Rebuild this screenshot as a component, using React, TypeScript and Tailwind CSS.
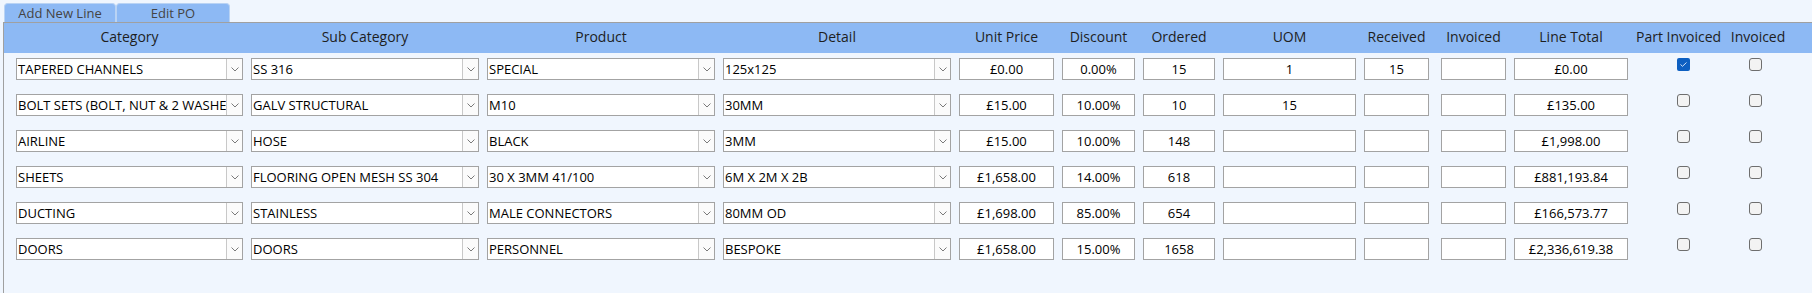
import React from "react";

type Line = {
  category: string;
  sub: string;
  product: string;
  detail: string;
  price: string;
  discount: string;
  ordered: string;
  uom: string;
  received: string;
  invoiced: string;
  total: string;
  partInvoiced: boolean;
  isInvoiced: boolean;
};

const lines: Line[] = [
  { category: "TAPERED CHANNELS", sub: "SS 316", product: "SPECIAL", detail: "125x125", price: "£0.00", discount: "0.00%", ordered: "15", uom: "1", received: "15", invoiced: "", total: "£0.00", partInvoiced: true, isInvoiced: false },
  { category: "BOLT SETS (BOLT, NUT & 2 WASHERS)", sub: "GALV STRUCTURAL", product: "M10", detail: "30MM", price: "£15.00", discount: "10.00%", ordered: "10", uom: "15", received: "", invoiced: "", total: "£135.00", partInvoiced: false, isInvoiced: false },
  { category: "AIRLINE", sub: "HOSE", product: "BLACK", detail: "3MM", price: "£15.00", discount: "10.00%", ordered: "148", uom: "", received: "", invoiced: "", total: "£1,998.00", partInvoiced: false, isInvoiced: false },
  { category: "SHEETS", sub: "FLOORING OPEN MESH SS 304", product: "30 X 3MM 41/100", detail: "6M X 2M X 2B", price: "£1,658.00", discount: "14.00%", ordered: "618", uom: "", received: "", invoiced: "", total: "£881,193.84", partInvoiced: false, isInvoiced: false },
  { category: "DUCTING", sub: "STAINLESS", product: "MALE CONNECTORS", detail: "80MM OD", price: "£1,698.00", discount: "85.00%", ordered: "654", uom: "", received: "", invoiced: "", total: "£166,573.77", partInvoiced: false, isInvoiced: false },
  { category: "DOORS", sub: "DOORS", product: "PERSONNEL", detail: "BESPOKE", price: "£1,658.00", discount: "15.00%", ordered: "1658", uom: "", received: "", invoiced: "", total: "£2,336,619.38", partInvoiced: false, isInvoiced: false },
];

const cols =
  "grid grid-cols-[227px_228px_228px_228px_95px_73px_72px_133px_65px_69px_114px_92px_44px] gap-x-2";

const Combo = ({ value }: { value: string }) => (
  <div className="flex h-[22px] border border-[#a3a3a3] bg-white">
    <div className="flex-1 overflow-hidden whitespace-nowrap pl-[1px] text-[13px] leading-[20px] text-black">
      {value}
    </div>
    <div className="flex w-[16px] items-center justify-center border-l border-[#c8c8c8] bg-[#fbfbfb]">
      <svg width="8" height="5" viewBox="0 0 8 5">
        <path d="M0.5 0.5 L4 4 L7.5 0.5" fill="none" stroke="#7a7a7a" strokeWidth="1" />
      </svg>
    </div>
  </div>
);

const Box = ({ value }: { value: string }) => (
  <div className="h-[22px] border border-[#a3a3a3] bg-white text-center text-[13px] leading-[20px] text-black">
    {value}
  </div>
);

const Check = ({ checked }: { checked: boolean }) =>
  checked ? (
    <div className="flex h-[13px] w-[13px] items-center justify-center rounded-[2px] bg-[#0d5fc1]">
      <svg width="7" height="5" viewBox="0 0 7 5">
        <path d="M0.5 2.5 L2.5 4.3 L6.5 0.5" fill="none" stroke="#cfe0f7" strokeWidth="1" />
      </svg>
    </div>
  ) : (
    <div className="h-[13px] w-[13px] rounded-[3px] border border-[#6e6e6e] bg-[#f3f3f3]" />
  );

export default function App() {
  return (
    <div className="h-[293px] w-[1812px] overflow-hidden bg-[#f0f6fe] font-['Open_Sans',sans-serif]">
      {/* tabs */}
      <div className="flex pl-1 pt-[3px]">
        <div className="flex h-[19px] w-[112px] items-center justify-center rounded-t-[4px] border border-b-0 border-[#b9d3f4] bg-[#8db9f4] text-[13px] leading-none text-[#444444]">
          Add New Line
        </div>
        <div className="flex h-[19px] w-[114px] items-center justify-center rounded-t-[4px] border border-b-0 border-[#b9d3f4] bg-[#8db9f4] text-[13px] leading-none text-[#444444]">
          Edit PO
        </div>
      </div>

      {/* panel */}
      <div className="ml-[3px] h-[271px] border-l border-t border-[#a0a0a0]">
        <div className={`${cols} h-[30px] items-center bg-[#8db9f4] pb-[2px] pl-3 text-[14px] leading-none text-[#1e1e1e]`}>
          {[
            "Category",
            "Sub Category",
            "Product",
            "Detail",
            "Unit Price",
            "Discount",
            "Ordered",
            "UOM",
            "Received",
            "Invoiced",
            "Line Total",
          ].map((h, i) => (
            <div key={h} className={`whitespace-nowrap text-center ${i === 9 ? "pl-1" : ""}`}>
              {h}
            </div>
          ))}
          <div className="whitespace-nowrap">Part Invoiced</div>
          <div className="flex justify-center whitespace-nowrap">Invoiced</div>
        </div>

        <div className="flex flex-col gap-[14px] pt-[5px]">
          {lines.map((l, i) => (
            <div key={i} className={`${cols} pl-3`}>
              <Combo value={l.category} />
              <Combo value={l.sub} />
              <Combo value={l.product} />
              <Combo value={l.detail} />
              <Box value={l.price} />
              <Box value={l.discount} />
              <Box value={l.ordered} />
              <Box value={l.uom} />
              <Box value={l.received} />
              <div className="pl-1">
                <Box value={l.invoiced} />
              </div>
              <Box value={l.total} />
              <div className="pl-[41px]">
                <Check checked={l.partInvoiced} />
              </div>
              <div className="pl-[13px]">
                <Check checked={l.isInvoiced} />
              </div>
            </div>
          ))}
        </div>
      </div>
    </div>
  );
}
